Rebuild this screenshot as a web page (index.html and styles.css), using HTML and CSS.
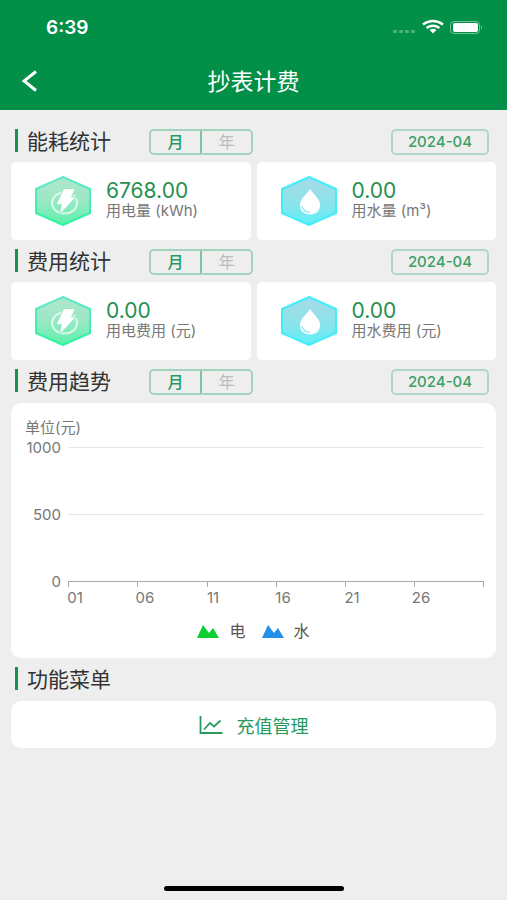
FILE: index.html
```
<!DOCTYPE html>
<html lang="zh-CN">
<head>
    <meta charset="UTF-8">
    <meta name="viewport" content="width=device-width, initial-scale=1.0">
    <title>抄表计费</title>
    <link rel="stylesheet" href="styles.css">
</head>
<body>
<!-- 公用图标 -->
<svg class="defs" width="0" height="0" aria-hidden="true">
    <defs>
        <linearGradient id="green" x1="0" y1="0" x2="0" y2="1">
            <stop offset="0" stop-color="#b4e6ce"/>
            <stop offset="0.5" stop-color="#98e8c4"/>
            <stop offset="1" stop-color="#5cf0ac"/>
        </linearGradient>
        <linearGradient id="greenLine" x1="0" y1="0" x2="0" y2="1">
            <stop offset="0" stop-color="#62e8c8"/>
            <stop offset="1" stop-color="#2cf598"/>
        </linearGradient>
        <linearGradient id="blue" x1="0" y1="0" x2="0" y2="1">
            <stop offset="0" stop-color="#a4dce6"/>
            <stop offset="0.5" stop-color="#90e2ea"/>
            <stop offset="1" stop-color="#5cf0f8"/>
        </linearGradient>
        <symbol id="electric" viewBox="0 0 56 50">
            <path d="M28 1L55 13V37L28 49L1 37V13Z" fill="url(#green)" stroke="url(#greenLine)" stroke-width="2"/>
            <ellipse cx="29.500" cy="27" rx="12.500" ry="10.500" fill="none" stroke="#fff" stroke-opacity="0.7" stroke-width="2"/>
            <path d="M29 13H39.500L36 21.500H40L25 37.500L27 28H22Z" fill="#fff" stroke="#98e8c4" stroke-width="2" paint-order="stroke"/>
        </symbol>
        <symbol id="water" viewBox="0 0 56 50">
            <path d="M28 1L55 13V37L28 49L1 37V13Z" fill="url(#blue)" stroke="#44eef8" stroke-width="2"/>
            <path d="M29 13C25 19 19 23 19 29C19 35 23 38.500 29 38.500S39 35 39 29C39 23 33 19 29 13Z" fill="#fff"/>
            <path d="M21 30.500C22 34 25 36 28.500 36.500" fill="none" stroke="#8fe3ec" stroke-width="1.200" stroke-linecap="round"/>
        </symbol>
    </defs>
</svg>

<header class="header">
    <div class="status">
        <span class="time">6:39</span>
        <svg class="status-icons" width="92" height="18" viewBox="0 0 92 18" aria-hidden="true">
            <g fill="#fff" fill-opacity="0.3">
                <rect x="1" y="12" width="4" height="3" rx="1"/>
                <rect x="7" y="12" width="4" height="3" rx="1"/>
                <rect x="13" y="12" width="4" height="3" rx="1"/>
                <rect x="19" y="12" width="4" height="3" rx="1"/>
            </g>
            <g fill="none" stroke="#fff" stroke-width="2.500">
                <path d="M31 6.500Q41 -0.500 51 6.500"/>
                <path d="M34.500 10Q41 5.500 47.500 10"/>
            </g>
            <path d="M37.500 12Q41 9.500 44.500 12L41 15.500Z" fill="#fff"/>
            <rect x="58.500" y="3.500" width="29" height="12" rx="3.500" fill="none" stroke="#fff" stroke-opacity="0.45"/>
            <rect x="61" y="5" width="25" height="9" rx="2" fill="#fff"/>
            <path d="M89 7.500Q91 9.500 89 11.500Z" fill="#fff" fill-opacity="0.5"/>
        </svg>
    </div>
    <div class="nav">
        <button class="back" type="button" aria-label="返回">
            <svg width="16" height="22" viewBox="0 0 16 22"><path d="M14 1.500L2 11L14 20.500" fill="none" stroke="#fff" stroke-width="3"/></svg>
        </button>
        <h1>抄表计费</h1>
    </div>
</header>

<main class="main">
    <section>
        <div class="head">
            <h2>能耗统计</h2>
            <div class="tabs">
                <button class="current" type="button">月</button>
                <button type="button">年</button>
            </div>
            <button class="date" type="button">2024-04</button>
        </div>
        <div class="cards">
            <div class="card">
                <svg class="icon" aria-hidden="true"><use href="#electric"/></svg>
                <div>
                    <p class="num">6768.00</p>
                    <p class="label">用电量 (kWh)</p>
                </div>
            </div>
            <div class="card">
                <svg class="icon" aria-hidden="true"><use href="#water"/></svg>
                <div>
                    <p class="num">0.00</p>
                    <p class="label">用水量 (m³)</p>
                </div>
            </div>
        </div>
    </section>

    <section>
        <div class="head">
            <h2>费用统计</h2>
            <div class="tabs">
                <button class="current" type="button">月</button>
                <button type="button">年</button>
            </div>
            <button class="date" type="button">2024-04</button>
        </div>
        <div class="cards">
            <div class="card">
                <svg class="icon" aria-hidden="true"><use href="#electric"/></svg>
                <div>
                    <p class="num">0.00</p>
                    <p class="label">用电费用 (元)</p>
                </div>
            </div>
            <div class="card">
                <svg class="icon" aria-hidden="true"><use href="#water"/></svg>
                <div>
                    <p class="num">0.00</p>
                    <p class="label">用水费用 (元)</p>
                </div>
            </div>
        </div>
    </section>

    <section>
        <div class="head">
            <h2>费用趋势</h2>
            <div class="tabs">
                <button class="current" type="button">月</button>
                <button type="button">年</button>
            </div>
            <button class="date" type="button">2024-04</button>
        </div>
        <div class="panel">
            <svg class="chart" viewBox="0 0 485 208">
                <text x="14" y="30">单位(元)</text>
                <g text-anchor="end">
                    <text x="50" y="50">1000</text>
                    <text x="50" y="117">500</text>
                    <text x="50" y="184">0</text>
                </g>
                <path class="grid" d="M57 44.500H473M57 111.500H473"/>
                <path class="axis" d="M57 178.500H473M57.500 178V184M126.500 178V184M196.500 178V184M265.500 178V184M334.500 178V184M403.500 178V184M472.500 178V184"/>
                <g text-anchor="middle">
                    <text x="64" y="200">01</text>
                    <text x="134" y="200">06</text>
                    <text x="202" y="200">11</text>
                    <text x="272" y="200">16</text>
                    <text x="341" y="200">21</text>
                    <text x="410" y="200">26</text>
                </g>
            </svg>
            <ul class="legend">
                <li>
                    <svg width="22" height="13" viewBox="0 0 22 13" aria-hidden="true"><path d="M0 13L6 0L12 8L16 3L22 13Z" fill="#0ccf31"/></svg>
                    <span>电</span>
                </li>
                <li>
                    <svg width="22" height="13" viewBox="0 0 22 13" aria-hidden="true"><path d="M0 13L6 0L12 8L16 3L22 13Z" fill="#2391ea"/></svg>
                    <span>水</span>
                </li>
            </ul>
        </div>
    </section>

    <section>
        <div class="head">
            <h2>功能菜单</h2>
        </div>
        <a class="menu" href="#">
            <svg width="24" height="20" viewBox="0 0 24 20" aria-hidden="true"><path d="M1.500 1V18H23.500M5 14.500L11 8L15 11.500L21.500 5.500" fill="none" stroke="#269a5d" stroke-width="1.800"/></svg>
            <span>充值管理</span>
        </a>
    </section>
</main>

<footer class="footer">
    <div class="home"></div>
</footer>
</body>
</html>
```
FILE: styles.css
```
* {
    margin: 0;
    padding: 0;
    box-sizing: border-box;
}

body {
    display: flex;
    flex-direction: column;
    min-height: 100vh;
    background-color: #eeeeee;
    font-family: Inter, "Noto Sans CJK SC", sans-serif;
    color: #333333;
}

ul {
    list-style: none;
}

button {
    border: none;
    background: none;
    font-family: inherit;
    cursor: pointer;
}

svg {
    display: block;
}

.defs {
    position: absolute;
}

.header {
    background-color: #029048;
    color: #fff;
}

.status {
    display: flex;
    justify-content: space-between;
    align-items: center;
    height: 54px;
    padding: 0 23px 0 46px;
}

.time {
    font-size: 19px;
    font-weight: 600;
}

.nav {
    display: grid;
    grid-template-columns: 38px 1fr 38px;
    align-items: center;
    height: 56px;
    padding-bottom: 2px;
}

.back {
    padding-left: 22px;
}

.nav h1 {
    padding-top: 2px;
    font-size: 23px;
    font-weight: 400;
    line-height: 32px;
    text-align: center;
}

.main {
    flex: 1;
    padding: 10px 11px;
}

.head {
    display: flex;
    align-items: flex-start;
    min-height: 42px;
    padding: 9px 7px 7px 4px;
}

.head h2 {
    width: 134px;
    padding: 3px 0 0 9px;
    border-left: 3px solid #179150;
    font-size: 21px;
    font-weight: 400;
    line-height: 20px;
}

.tabs {
    display: flex;
    width: 104px;
    height: 26px;
    border: 2px solid #a3d3bd;
    border-radius: 5px;
}

.tabs button {
    flex: 1;
    font-size: 16px;
    line-height: 20px;
    color: #bbbbbb;
}

.tabs .current {
    border-right: 2px solid #7fc4a2;
    font-weight: 500;
    color: #269a5d;
}

.date {
    width: 98px;
    height: 26px;
    margin-left: auto;
    border: 2px solid #b0d6c4;
    border-radius: 5px;
    font-size: 15px;
    font-weight: 500;
    line-height: 22px;
    color: #3b9e66;
}

.cards {
    display: grid;
    grid-template-columns: 1fr 1fr;
    gap: 6px;
}

.card {
    display: flex;
    align-items: center;
    gap: 15px;
    height: 78px;
    padding-left: 24px;
    border-radius: 5px;
    background-color: #fff;
}

.icon {
    width: 56px;
    height: 50px;
}

.num {
    font-size: 21px;
    line-height: 20px;
    color: #269050;
}

.label {
    font-size: 15px;
    line-height: 20px;
    color: #777777;
}

.panel {
    margin-top: 1px;
    padding-bottom: 16px;
    border-radius: 10px;
    background-color: #fff;
}

.chart {
    width: 100%;
}

.chart text {
    font-size: 15px;
    fill: #777777;
}

.grid {
    stroke: #e6e6e6;
}

.axis {
    fill: none;
    stroke: #aaaaaa;
}

.legend {
    display: flex;
    justify-content: center;
    gap: 16px;
    padding-top: 9px;
}

.legend li {
    display: flex;
    align-items: center;
    gap: 10px;
    font-size: 16px;
    line-height: 22px;
    color: #555555;
}

.menu {
    display: flex;
    justify-content: center;
    align-items: center;
    gap: 14px;
    height: 47px;
    margin-top: 1px;
    border-radius: 10px;
    background-color: #fff;
    font-size: 18px;
    color: #269a5d;
    text-decoration: none;
}

.footer {
    padding-bottom: 9px;
}

.home {
    width: 180px;
    height: 5px;
    margin: 0 auto;
    border-radius: 3px;
    background-color: #000;
}
```
